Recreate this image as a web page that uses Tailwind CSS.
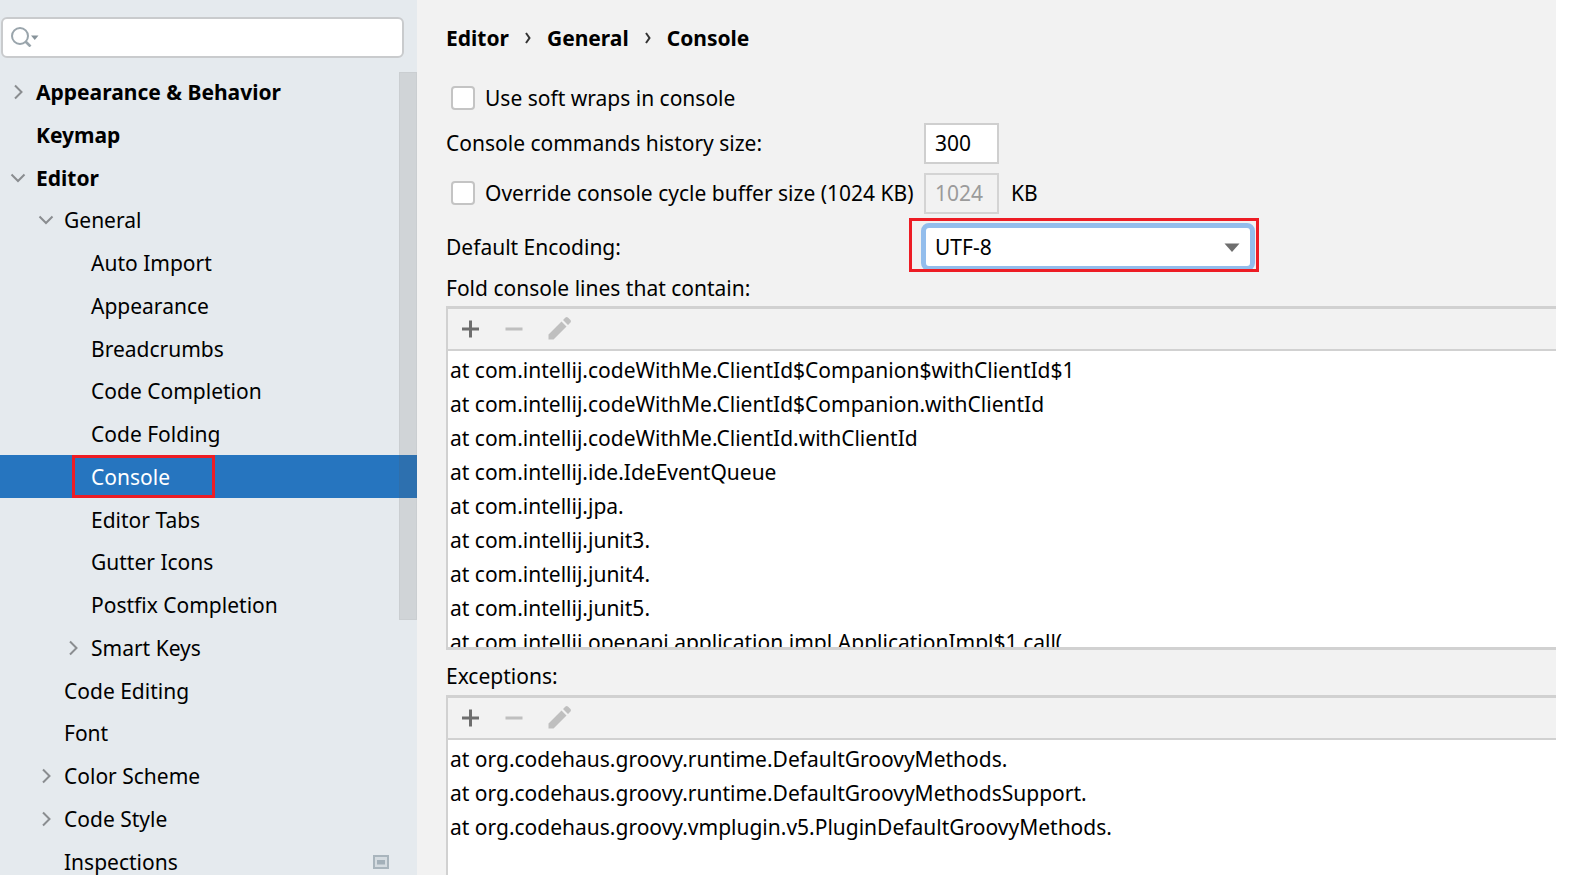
<!DOCTYPE html>
<html lang="en">
<head>
    <meta charset="UTF-8">
    <meta name="viewport" content="width=device-width, initial-scale=1.0">
    <title>Settings - Console</title>
    <script src="https://cdn.jsdelivr.net/npm/@tailwindcss/browser@4"></script>
</head>
<body class="bg-white text-black font-['Noto_Sans',sans-serif] text-[21px] leading-[34px]">

<!-- shared icons -->
<svg class="hidden">
    <symbol id="right" viewBox="0 0 16 16"><path d="M5 1.5 11.5 8 5 14.5" fill="none" stroke="#8a8d90" stroke-width="2"/></symbol>
    <symbol id="down" viewBox="0 0 16 16"><path d="M1.5 4.5 8 11 14.5 4.5" fill="none" stroke="#8a8d90" stroke-width="2"/></symbol>
    <symbol id="plus" viewBox="0 0 24 24"><path d="M12.500 3.500v17M4 12h17" fill="none" stroke="#6e6e6e" stroke-width="3"/></symbol>
    <symbol id="minus" viewBox="0 0 24 24"><path d="M3.500 12h17" fill="none" stroke="#bfbfbf" stroke-width="3"/></symbol>
    <symbol id="pencil" viewBox="-2 1 24 24" overflow="visible"><path d="M0.500 18.500 13.500 5.500l5 5L5.500 23.500H0.500zM15 4l2.500-2.500q1.200-1 2.400 0l2.600 2.600q1 1.200 0 2.400L20 9z" fill="#bfbfbf"/></symbol>
</svg>

<div class="flex h-screen overflow-hidden pr-4">

    <!-- settings tree -->
    <aside class="relative w-[417px] shrink-0 bg-[#e5eaee] pt-[17px] overflow-hidden">
        <div class="relative ml-px mr-[13px]">
            <input type="text" aria-label="Search settings" class="block w-full h-[41px] rounded-md border-2 border-[#c9cbcd] bg-white pl-11 outline-none">
            <svg class="absolute left-2.5 top-2.5 w-7 h-5" viewBox="0 0 28 20" fill="none">
                <circle cx="9" cy="9" r="8" stroke="#9aa5ac" stroke-width="2"/>
                <path d="m14.500 14.500 5 5" stroke="#9aa5ac" stroke-width="2.600"/>
                <path d="M20 8.500h7.500L23.750 13z" fill="#87939a"/>
            </svg>
        </div>

        <nav class="pt-3">
            <ul class="whitespace-nowrap [&>li]:h-[43px] [&>li:nth-child(4n)]:h-[42px]">
                <li class="flex items-center pl-2.5 gap-2.5 font-bold"><svg class="size-4"><use href="#right"/></svg><a href="#">Appearance &amp; Behavior</a></li>
                <li class="flex items-center pl-9 font-bold"><a href="#">Keymap</a></li>
                <li class="flex items-center pl-2.5 gap-2.5 font-bold"><svg class="size-4"><use href="#down"/></svg><a href="#">Editor</a></li>
                <li class="flex items-center pl-[38px] gap-2.5"><svg class="size-4"><use href="#down"/></svg><a href="#">General</a></li>
                <li class="flex items-center pl-[91px]"><a href="#">Auto Import</a></li>
                <li class="flex items-center pl-[91px]"><a href="#">Appearance</a></li>
                <li class="flex items-center pl-[91px]"><a href="#">Breadcrumbs</a></li>
                <li class="flex items-center pl-[91px]"><a href="#">Code Completion</a></li>
                <li class="flex items-center pl-[91px]"><a href="#">Code Folding</a></li>
                <li class="flex items-center pl-[72px] bg-[#2675bf] text-white"><a href="#" aria-current="page" class="w-[143px] h-[43px] leading-[38px] pl-4 border-[3px] border-[#ed1c24]">Console</a></li>
                <li class="flex items-center pl-[91px]"><a href="#">Editor Tabs</a></li>
                <li class="flex items-center pl-[91px]"><a href="#">Gutter Icons</a></li>
                <li class="flex items-center pl-[91px]"><a href="#">Postfix Completion</a></li>
                <li class="flex items-center pl-[65px] gap-2.5"><svg class="size-4"><use href="#right"/></svg><a href="#">Smart Keys</a></li>
                <li class="flex items-center pl-16"><a href="#">Code Editing</a></li>
                <li class="flex items-center pl-16"><a href="#">Font</a></li>
                <li class="flex items-center pl-[38px] gap-2.5"><svg class="size-4"><use href="#right"/></svg><a href="#">Color Scheme</a></li>
                <li class="flex items-center pl-[38px] gap-2.5"><svg class="size-4"><use href="#right"/></svg><a href="#">Code Style</a></li>
                <li class="flex items-center justify-between pl-16 pr-7">
                    <a href="#">Inspections</a>
                    <svg class="w-4 h-3.5" viewBox="0 0 16 14"><path d="M1 1h14v12H1z" fill="#d5dce1" stroke="#a9b5bd" stroke-width="2"/><path d="M4 5h8v4.500H4z" fill="#a3b0b9"/></svg>
                </li>
            </ul>
        </nav>

        <!-- scrollbar thumb -->
        <div class="absolute right-0 top-[72px] w-[18px] h-[548px] bg-[#5a5a5a]/15 border border-[#5a5a5a]/5"></div>
    </aside>

    <main class="flex-1 min-w-0 flex flex-col bg-[#f2f2f2] pl-[29px] whitespace-nowrap">
        <nav class="h-[75px] shrink-0 flex items-center gap-[15px] font-bold">
            <a href="#">Editor</a>
            <svg class="w-2 h-3" viewBox="0 0 8 12"><path d="M2 1l3.500 5L2 11" fill="none" stroke="#333" stroke-width="2"/></svg>
            <a href="#">General</a>
            <svg class="w-2 h-3" viewBox="0 0 8 12"><path d="M2 1l3.500 5L2 11" fill="none" stroke="#333" stroke-width="2"/></svg>
            <a href="#">Console</a>
        </nav>

        <form class="shrink-0">
            <div class="h-[46px] flex items-center gap-2.5 pl-[5px]">
                <input id="wraps" type="checkbox" class="appearance-none size-6 rounded border-2 border-[#c4c4c4] bg-white">
                <label for="wraps">Use soft wraps in console</label>
            </div>
            <div class="h-11 flex items-center">
                <label for="history" class="w-[478px]">Console commands history size:</label>
                <input id="history" type="text" value="300" class="w-[75px] h-[41px] border-2 border-[#cfcfcf] bg-white pl-[9px] outline-none">
            </div>
            <div class="h-14 flex items-center">
                <div class="w-[478px] flex items-center gap-2.5 pl-[5px]">
                    <input id="override" type="checkbox" class="appearance-none size-6 shrink-0 rounded border-2 border-[#c4c4c4] bg-white">
                    <label for="override">Override console cycle buffer size (1024 KB)</label>
                </div>
                <input id="buffer" type="text" value="1024" disabled aria-label="Buffer size" class="w-[75px] h-[41px] border-2 border-[#d4d4d4] pl-[9px] text-[#9b9b9b]">
                <label for="buffer" class="pl-3">KB</label>
            </div>
            <div class="h-[51px] flex items-center">
                <label for="encoding" class="w-[475px]">Default Encoding:</label>
                <div class="relative w-[334px]">
                    <select id="encoding" class="block w-full h-12 appearance-none rounded-lg border-[5px] border-[#93bdec] bg-white pl-[9px] outline-none">
                        <option>UTF-8</option>
                        <option>GBK</option>
                        <option>ISO-8859-1</option>
                    </select>
                    <svg class="absolute right-[15px] top-5 w-4 h-2.5 pointer-events-none" viewBox="0 0 16 10"><path d="M0.500 0.500h15L8 9z" fill="#6e6e6e"/></svg>
                    <div class="absolute -left-3 -right-1 -top-[5px] -bottom-px border-[3px] border-[#ed1c24] pointer-events-none"></div>
                </div>
            </div>
        </form>

        <h2 class="h-[34px] leading-[32px] shrink-0">Fold console lines that contain:</h2>
        <section class="h-[344px] shrink-0 flex flex-col border-y-[3px] border-l-2 border-[#d1d1d1] bg-white">
            <div class="h-[42px] shrink-0 flex items-center gap-5 pl-2.5 bg-[#f2f2f2] border-b-2 border-[#d1d1d1]">
                <button type="button" aria-label="Add"><svg class="size-6"><use href="#plus"/></svg></button>
                <button type="button" aria-label="Remove" disabled><svg class="size-6"><use href="#minus"/></svg></button>
                <button type="button" aria-label="Edit" disabled><svg class="size-6 overflow-visible"><use href="#pencil"/></svg></button>
            </div>
            <ul class="flex-1 overflow-hidden pl-0.5 pt-0.5">
                <li>at com.intellij.codeWithMe.ClientId$Companion$withClientId$1</li>
                <li>at com.intellij.codeWithMe.ClientId$Companion.withClientId</li>
                <li>at com.intellij.codeWithMe.ClientId.withClientId</li>
                <li>at com.intellij.ide.IdeEventQueue</li>
                <li>at com.intellij.jpa.</li>
                <li>at com.intellij.junit3.</li>
                <li>at com.intellij.junit4.</li>
                <li>at com.intellij.junit5.</li>
                <li>at com.intellij.openapi.application.impl.ApplicationImpl$1.call(</li>
            </ul>
        </section>

        <h2 class="h-[45px] pt-[9px] shrink-0">Exceptions:</h2>
        <section class="flex-1 flex flex-col border-t-[3px] border-l-2 border-[#d1d1d1] bg-white">
            <div class="h-[42px] shrink-0 flex items-center gap-5 pl-2.5 bg-[#f2f2f2] border-b-2 border-[#d1d1d1]">
                <button type="button" aria-label="Add"><svg class="size-6"><use href="#plus"/></svg></button>
                <button type="button" aria-label="Remove" disabled><svg class="size-6"><use href="#minus"/></svg></button>
                <button type="button" aria-label="Edit" disabled><svg class="size-6 overflow-visible"><use href="#pencil"/></svg></button>
            </div>
            <ul class="flex-1 overflow-hidden pl-0.5 pt-0.5">
                <li>at org.codehaus.groovy.runtime.DefaultGroovyMethods.</li>
                <li>at org.codehaus.groovy.runtime.DefaultGroovyMethodsSupport.</li>
                <li>at org.codehaus.groovy.vmplugin.v5.PluginDefaultGroovyMethods.</li>
            </ul>
        </section>
    </main>
</div>
</body>
</html>
